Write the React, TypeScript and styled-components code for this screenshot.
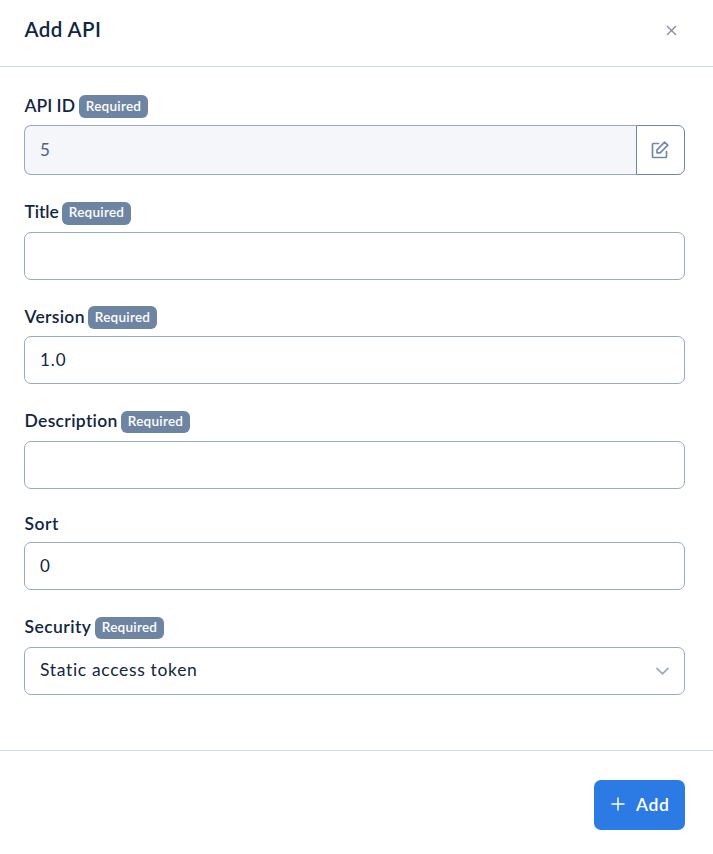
import React from "react";
import styled, { createGlobalStyle } from "styled-components";

const GlobalStyle = createGlobalStyle`
  * { box-sizing: border-box; }
  body { margin: 0; background: #fff; }
  body, input, button { font-family: Lato, "Liberation Sans", sans-serif; color: #12263f; }
`;

const Panel = styled.div`
  width: 100%;
  height: 854px;
  display: flex;
  flex-direction: column;
  overflow: hidden;
`;

const Header = styled.header`
  height: 67px;
  flex: none;
  display: flex;
  align-items: flex-start;
  justify-content: space-between;
  padding: 17px 36px 0 24.5px;
  border-bottom: 1px solid #d2ddec;
`;

const Heading = styled.h1`
  margin: 0;
  font-size: 20.5px;
  line-height: 24px;
  font-weight: 600;
  letter-spacing: 0.4px;
`;

const IconButton = styled.button`
  display: flex;
  padding: 8px 0 0;
  border: 0;
  background: none;
`;

const Form = styled.form`
  flex: none;
  height: 683px;
  padding: 28px 28px 0 24px;
`;

const Field = styled.div<{ $after?: number }>`
  margin-bottom: ${(p) => p.$after ?? 27}px;
`;

const LabelRow = styled.div<{ $height?: number }>`
  display: flex;
  align-items: flex-start;
  height: ${(p) => p.$height ?? 23}px;
  margin-bottom: 7px;
`;

const Label = styled.label<{ $width: number; $spacing?: number; $line?: number }>`
  width: ${(p) => p.$width}px;
  flex: none;
  padding-left: 0.5px;
  font-size: 17.5px;
  line-height: ${(p) => p.$line ?? 20}px;
  font-weight: 600;
  white-space: nowrap;
  letter-spacing: ${(p) => p.$spacing ?? 0}px;
`;

const Badge = styled.span<{ $height?: number; $line?: number }>`
  width: 69px;
  height: ${(p) => p.$height ?? 23}px;
  border-radius: 6px;
  background: #6e84a3;
  color: #fff;
  font-size: 13.5px;
  line-height: ${(p) => p.$line ?? 21}px;
  font-weight: 600;
  letter-spacing: 0.25px;
  text-align: center;
`;

const Input = styled.input`
  display: block;
  width: 100%;
  height: 48px;
  padding: 0 15px 1px;
  border: 1px solid #95aac9;
  border-radius: 7px;
  background: #fff;
  font-size: 17px;
  letter-spacing: 0.9px;
  outline: 0;
`;

const InputGroup = styled.div`
  display: flex;
  height: 50px;
`;

const LockedInput = styled(Input)`
  flex: 1;
  min-width: 0;
  height: 50px;
  border-right: 0;
  border-radius: 7px 0 0 7px;
  background: #f4f6fa;
  color: #4d6080;
`;

const EditButton = styled.button`
  width: 49px;
  display: grid;
  place-items: center;
  padding: 0 2px 1px 0;
  border: 1px solid #6e84a3;
  border-radius: 0 7px 7px 0;
  background: #fff;
`;

const Select = styled.div`
  display: flex;
  align-items: center;
  justify-content: space-between;
  height: 48px;
  padding: 0 15px;
  border: 1px solid #95aac9;
  border-radius: 7px;
  font-size: 17.5px;
  letter-spacing: 0.67px;
`;

const SelectValue = styled.span`
  padding-bottom: 3px;
`;

const Footer = styled.footer`
  flex: 1;
  display: flex;
  justify-content: flex-end;
  align-items: flex-start;
  padding: 29px 28px 0;
  border-top: 1px solid #d2ddec;
`;

const AddButton = styled.button`
  width: 91px;
  height: 50px;
  display: flex;
  align-items: center;
  padding: 0 0 2px 17px;
  gap: 11px;
  border: 0;
  border-radius: 7px;
  background: #2c7be5;
  color: #fff;
  font-size: 17.5px;
  font-weight: 600;
  letter-spacing: 0.6px;
`;

export default function App() {
  return (
    <Panel>
      <GlobalStyle />
      <Header>
        <Heading>Add API</Heading>
        <IconButton aria-label="Close">
          <svg width="11" height="11" viewBox="0 0 11 11" stroke="#7e8b9e" strokeWidth="1.2">
            <path d="M1 1L10 10M10 1L1 10" />
          </svg>
        </IconButton>
      </Header>
      <Form>
        <Field>
          <LabelRow>
            <Label $width={55} $line={22}>API ID</Label>
            <Badge $line={22}>Required</Badge>
          </LabelRow>
          <InputGroup>
            <LockedInput defaultValue="5" readOnly />
            <EditButton type="button" aria-label="Edit">
              <svg width="18" height="18" viewBox="0 0 18 18" fill="none" stroke="#7388ad" strokeWidth="1.7" strokeLinejoin="round" strokeLinecap="round">
                <path d="M7.5 2.5H2.5Q1.5 2.5 1.5 3.5V15.5Q1.5 16.5 2.5 16.5H14.5Q15.5 16.5 15.5 15.5V10.5" />
                <path d="M6 8.8L13.6 1.2L16.8 4.2L9.2 11.8H6Z" />
              </svg>
            </EditButton>
          </InputGroup>
        </Field>
        <Field $after={26}>
          <LabelRow>
            <Label $width={38} $spacing={-0.1}>Title</Label>
            <Badge>Required</Badge>
          </LabelRow>
          <Input />
        </Field>
        <Field>
          <LabelRow>
            <Label $width={64} $spacing={0.3} $line={22}>Version</Label>
            <Badge $line={22}>Required</Badge>
          </LabelRow>
          <Input defaultValue="1.0" />
        </Field>
        <Field $after={24}>
          <LabelRow>
            <Label $width={97} $spacing={0.33}>Description</Label>
            <Badge $height={22}>Required</Badge>
          </LabelRow>
          <Input />
        </Field>
        <Field>
          <LabelRow $height={22}>
            <Label $width={97} $spacing={0.5} $line={22}>Sort</Label>
          </LabelRow>
          <Input defaultValue="0" />
        </Field>
        <Field>
          <LabelRow>
            <Label $width={71} $spacing={0.45}>Security</Label>
            <Badge $height={22}>Required</Badge>
          </LabelRow>
          <Select>
            <SelectValue>Static access token</SelectValue>
            <svg width="13" height="8" viewBox="0 0 13 8" fill="none" stroke="#95aac9" strokeWidth="1.7" strokeLinecap="round" strokeLinejoin="round">
              <path d="M1 1.3L6.5 6.8L12 1.3" />
            </svg>
          </Select>
        </Field>
      </Form>
      <Footer>
        <AddButton>
          <svg width="14" height="14" viewBox="0 0 14 14" stroke="#fff" strokeWidth="1.5" strokeLinecap="round">
            <path d="M7 1V13M1 7H13" />
          </svg>
          Add
        </AddButton>
      </Footer>
    </Panel>
  );
}
